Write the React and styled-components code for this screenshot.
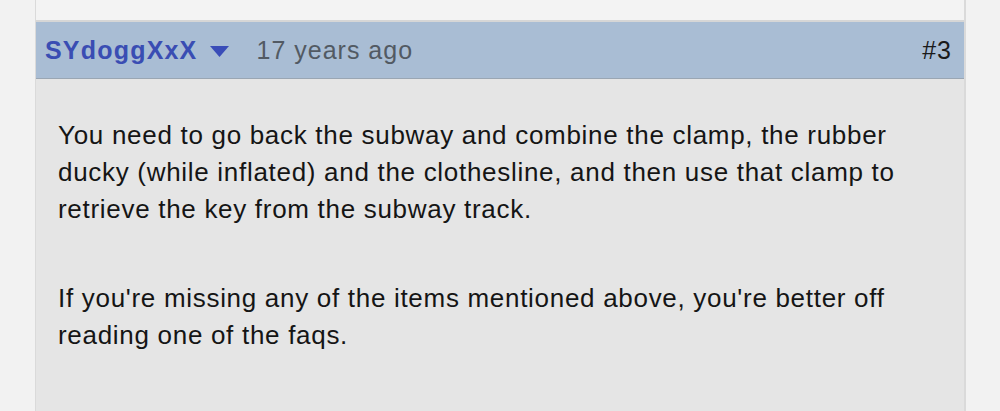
import React from "react"
import styled, { createGlobalStyle } from "styled-components"

const GlobalStyle = createGlobalStyle`
  html, body {
    margin: 0;
    padding: 0;
    background: #f2f2f2;
    font-family: "Liberation Sans", Arial, sans-serif;
  }
`

const Page = styled.div`
  width: 1000px;
  height: 411px;
  overflow: hidden;
  padding: 0 34px 0 35px;
  box-sizing: border-box;
`

const Thread = styled.div`
  border-left: 1px solid #dadada;
  border-right: 2px solid #dadada;
  height: 100%;
  display: flex;
  flex-direction: column;
`

const PrevPost = styled.div`
  height: 20px;
  background: #f3f3f3;
  border-bottom: 2px solid #d6d6d6;
`

const Header = styled.div`
  height: 56px;
  background: #a9bdd4;
  border-bottom: 1px solid #9aa6b3;
  display: flex;
  align-items: center;
  padding: 0 12px 0 9px;
`

const User = styled.span`
  font-size: 25px;
  font-weight: bold;
  letter-spacing: 1.2px;
  color: #3a4db3;
`

const Caret = styled.svg`
  margin: 2px 0 0 12px;
  width: 19px;
  height: 11px;
`

const Time = styled.span`
  margin-left: 28px;
  font-size: 25px;
  letter-spacing: 1px;
  color: #525a63;
`

const Num = styled.span`
  margin-left: auto;
  font-size: 25px;
  letter-spacing: 1px;
  color: #1a1a1a;
`

const Body = styled.div`
  flex: 1;
  background: #e5e5e5;
  padding: 38px 30px 0 22px;
`

const Para = styled.p`
  margin: 0 0 52px;
  font-size: 26px;
  letter-spacing: 0.7px;
  line-height: 37px;
  color: #151515;
`

export default function App() {
  return (
    <>
      <GlobalStyle />
      <Page>
        <Thread>
          <PrevPost />
          <Header>
            <User>SYdoggXxX</User>
            <Caret viewBox="0 0 19 11">
              <path d="M0 0 H19 L9.5 11 Z" fill="#3a4db8" />
            </Caret>
            <Time>17 years ago</Time>
            <Num>#3</Num>
          </Header>
          <Body>
            <Para>
              You need to go back the subway and combine the clamp, the rubber
              ducky (while inflated) and the clothesline, and then use that
              clamp to retrieve the key from the subway track.
            </Para>
            <Para>
              If you're missing any of the items mentioned above, you're better
              off reading one of the faqs.
            </Para>
          </Body>
        </Thread>
      </Page>
    </>
  )
}
